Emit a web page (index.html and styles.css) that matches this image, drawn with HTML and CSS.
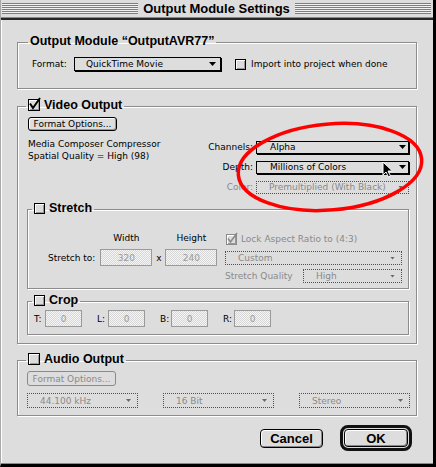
FILE: index.html
```html
<!DOCTYPE html>
<html lang="en">
<head>
<meta charset="utf-8">
<title>Output Module Settings</title>
<link rel="stylesheet" href="styles.css">
</head>
<body>
<div class="window">
  <div class="titlebar">
    <div class="stripes"></div>
    <div class="title">Output Module Settings</div>
    <div class="stripes"></div>
  </div>
  <div class="content">
    <fieldset class="group g-module">
      <legend class="legend">Output Module “OutputAVR77”</legend>
      <div class="format-row">
        <span class="format-lbl">Format:</span>
        <div class="popup pop-format"><span>QuickTime Movie</span><span class="tri"></span></div>
        <div class="check import"><span class="box"></span><span>Import into project when done</span></div>
      </div>
    </fieldset>

    <fieldset class="group g-video">
      <legend class="legend"><span class="lg"><span class="box big"><svg class="tick" width="10" height="10" viewBox="0 0 10 10"><path d="M1 3.5 L4 8 L11 -2" fill="none" stroke="#000" stroke-width="2"/></svg></span>Video Output</span></legend>
      <div class="btn-small">Format Options...</div>
      <div class="video-row">
        <div class="codec">Media Composer Compressor<br>Spatial Quality = High (98)</div>
        <div class="video-ctl">
          <div class="ctl-row"><span class="ctl-lbl">Channels:</span><div class="popup pop-video"><span>Alpha</span><span class="tri"></span></div></div>
          <div class="ctl-row"><span class="ctl-lbl">Depth:</span><div class="popup pop-video"><span>Millions of Colors</span><span class="tri"></span></div></div>
          <div class="ctl-row"><span class="ctl-lbl dis-text">Color:</span><div class="popup dis pop-video pop-color"><span>Premultiplied (With Black)</span><span class="tri small"></span></div></div>
        </div>
      </div>

      <fieldset class="group sub stretch">
        <legend class="legend"><span class="lg"><span class="box"></span>Stretch</span></legend>
        <div class="stretch-body">
          <div class="stretch-grid">
            <span></span><span class="colhead">Width</span><span></span><span class="colhead">Height</span>
            <span class="st-lbl">Stretch to:</span><span class="field">320</span><span class="times">x</span><span class="field">240</span>
          </div>
          <div class="stretch-right">
            <div class="check lock"><span class="box dis-box"><svg class="tick" width="9" height="9" viewBox="0 0 9 9"><path d="M1 3.5 L3.5 7 L10 -2" fill="none" stroke="#8a8a8a" stroke-width="1.6"/></svg></span><span>Lock Aspect Ratio to (4:3)</span></div>
            <div class="popup dis pop-custom"><span>Custom</span><span class="tri small"></span></div>
            <div class="quality-row"><span class="dis-text">Stretch Quality</span><div class="popup dis pop-quality"><span>High</span><span class="tri small"></span></div></div>
          </div>
        </div>
      </fieldset>

      <fieldset class="group sub crop">
        <legend class="legend"><span class="lg"><span class="box"></span>Crop</span></legend>
        <div class="crop-row">
          <span class="crop-lbl">T:</span><span class="field crop-field">0</span>
          <span class="crop-lbl">L:</span><span class="field crop-field">0</span>
          <span class="crop-lbl">B:</span><span class="field crop-field">0</span>
          <span class="crop-lbl">R:</span><span class="field crop-field">0</span>
        </div>
      </fieldset>
    </fieldset>

    <fieldset class="group audio">
      <legend class="legend"><span class="lg"><span class="box big"></span>Audio Output</span></legend>
      <div class="btn-small dis-btn">Format Options...</div>
      <div class="audio-pops">
        <div class="popup dis pop-audio"><span>44.100 kHz</span><span class="tri small"></span></div>
        <div class="popup dis pop-audio"><span>16 Bit</span><span class="tri small"></span></div>
        <div class="popup dis pop-audio"><span>Stereo</span><span class="tri small"></span></div>
      </div>
    </fieldset>

    <div class="actions">
      <div class="btn btn-cancel">Cancel</div>
      <div class="ok-ring"><div class="btn btn-ok">OK</div></div>
    </div>
  </div>
</div>

<svg class="annot" width="436" height="467" viewBox="0 0 436 467">
  <ellipse cx="330" cy="167" rx="92" ry="43" transform="rotate(-5 330 167)" fill="none" stroke="#ff0000" stroke-width="3.5"/>
  <path transform="translate(383 162)" d="M0 0 L0 13 L3 10 L5.5 15 L7.5 14 L5 9 L9.5 9 Z" fill="#000" stroke="#fff" stroke-width="1" stroke-linejoin="round"/>
</svg>
</body>
</html>
```

FILE: styles.css
```css
* { box-sizing: border-box; }
html, body { margin: 0; padding: 0; }
body {
  position: relative;
  width: 436px;
  height: 467px;
  background: #dddddd;
  font-family: "DejaVu Sans", Verdana, sans-serif;
  font-size: 9px;
  color: #000;
}
.window {
  width: 436px;
  height: 467px;
  background: #dddddd;
  border-left: 1px solid #a8a8a8;
  border-right: 3px solid #000;
  border-bottom: 3px solid #000;
  display: flex;
  flex-direction: column;
}
.titlebar {
  flex: none;
  height: 18px;
  display: flex;
  align-items: center;
  gap: 3px;
  padding: 0 2px 0 1px;
  border-bottom: 1px solid #8a8a8a;
}
.stripes {
  flex: 1;
  height: 11px;
  background: repeating-linear-gradient(to bottom, #7d7d7d 0 1px, #f2f2f2 1px 2px);
}
.title {
  font: bold 13px/14px "Liberation Sans", Arial, sans-serif;
  padding: 0 2px;
  white-space: nowrap;
}
.content {
  flex: 1;
  border-top: 2px solid #262626;
  border-bottom: 1px solid #8a8a8a;
  padding: 14px 16px 0 16px;
  box-shadow: inset 1px 0 0 #fff;
}

/* group boxes */
.group {
  margin: 0;
  padding: 0;
  min-width: 0;
  border: 1px solid #8c8c8c;
  box-shadow: 1px 1px 0 #fff, inset 1px 1px 0 #fff;
}
.legend {
  padding: 0 2px 3px;
  font: bold 12.5px/14px "Liberation Sans", Arial, sans-serif;
  white-space: nowrap;
}
.lg { display: inline-flex; align-items: center; gap: 4px; vertical-align: top; height: 14px; }

.box {
  flex: none;
  width: 11px;
  height: 11px;
  border: 1px solid #000;
  background: #dcdcdc;
  box-shadow: inset 1px 1px 0 #fff, inset -1px -1px 0 #999;
}
.box.big { width: 12px; height: 12px; }
.box.dis-box { border-color: #8a8a8a; }
.tick { display: block; overflow: visible; }

.check { display: flex; align-items: center; gap: 5px; white-space: nowrap; }

/* popups */
.popup {
  display: flex;
  align-items: center;
  justify-content: space-between;
  border: 1px solid #000;
  box-shadow: 1px 1px 0 #000;
  background: #dddddd;
  white-space: nowrap;
}
.popup.dis {
  border: 1px dotted #505050;
  box-shadow: none;
  color: #8a8a8a;
}
.tri {
  flex: none;
  width: 7px;
  height: 4px;
  background: #000;
  clip-path: polygon(0 0, 100% 0, 50% 100%);
}
.tri.small { width: 5px; height: 3px; background: #6a6a6a; }
.dis-text { color: #8a8a8a; }

/* output module group */
.g-module { padding: 5px 16px 16px 14px; }
.g-module > .legend { margin-left: -4px; }
.format-row { display: flex; align-items: center; height: 16px; }
.format-lbl { width: 42px; }
.pop-format { width: 147px; height: 14px; padding: 0 4px 0 11px; }
.import { margin-left: 14px; }

/* video group */
.g-video { margin-top: 9px; padding: 2px 6px 8px 10px; }
.g-video > .legend { margin-left: -2px; }
.btn-small {
  width: 89px;
  height: 14px;
  border: 1px solid #000;
  border-radius: 3px;
  background: #dddddd;
  box-shadow: inset 1px 1px 0 #fff, inset -1px -1px 0 #999;
  display: flex;
  align-items: center;
  justify-content: center;
  white-space: nowrap;
}
.btn-small.dis-btn { border-color: #8a8a8a; color: #8a8a8a; height: 15px; box-shadow: none; }
.video-row { display: flex; justify-content: space-between; margin-top: 9px; }
.codec { line-height: 12px; margin-top: -2px; white-space: nowrap; }
.video-ctl { display: flex; flex-direction: column; gap: 6px; padding-right: 1px; }
.ctl-row { display: flex; align-items: center; justify-content: flex-end; gap: 3px; height: 14px; }
.ctl-lbl { text-align: right; }
.pop-video { width: 153px; height: 13px; padding: 0 2px 0 13px; }
.pop-color { padding: 0 5px 0 12px; }

/* stretch */
.sub { margin-left: -1px; margin-right: 1px; }
.stretch { margin-top: 7px; padding: 15px 5px 5px 20px; }
.stretch > .legend { margin-left: -16px; }
.stretch-body { display: flex; justify-content: space-between; align-items: flex-start; }
.stretch-grid {
  display: grid;
  grid-template-columns: auto 52px 13px 52px;
  grid-template-rows: 11px 17px;
  row-gap: 5px;
  align-items: center;
}
.colhead { text-align: center; line-height: 11px; }
.st-lbl { padding-right: 5px; white-space: nowrap; }
.times { text-align: center; }
.field {
  display: flex;
  align-items: center;
  justify-content: center;
  height: 17px;
  border: 1px solid #9a9a9a;
  background: repeating-conic-gradient(#f6f6f6 0 25%, #d6d6d6 0 50%) 0 0 / 2px 2px;
  color: #9a9a9a;
}
.stretch-right { width: 178px; display: flex; flex-direction: column; }
.lock { height: 12px; gap: 4px; padding-left: 1px; color: #8a8a8a; }
.pop-custom { margin-top: 6px; width: 177px; height: 14px; padding: 0 6px 0 12px; }
.quality-row { margin-top: 4px; display: flex; justify-content: space-between; align-items: center; height: 14px; padding-right: 1px; }
.pop-quality { width: 99px; height: 14px; padding: 0 6px 0 12px; }

/* crop */
.crop { margin-top: 4px; padding: 0 5px 7px 6px; }
.crop > .legend { margin-left: -2px; }
.crop-row { display: flex; align-items: center; height: 17px; }
.crop-lbl { width: 11px; }
.crop-field { width: 37px; margin-right: 15px; }

/* audio */
.audio { margin-top: 8px; padding: 2px 6px 7px 9px; }
.audio > .legend { margin-left: -1px; }
.audio-pops { display: flex; justify-content: space-between; margin-top: 7px; }
.pop-audio { width: 111px; height: 15px; padding: 0 6px 0 12px; }

/* buttons */
.actions {
  display: flex;
  justify-content: flex-end;
  align-items: center;
  gap: 17px;
  margin-top: 9px;
  padding-right: 5px;
}
.btn {
  display: flex;
  align-items: center;
  justify-content: center;
  border: 1px solid #000;
  border-radius: 4px;
  background: #dddddd;
  box-shadow: inset 1px 1px 0 #fff, inset -1px -1px 0 #888;
  font: bold 13px/1 "Liberation Sans", Arial, sans-serif;
}
.btn-cancel { width: 63px; height: 19px; }
.ok-ring { border: 3px solid #111; border-radius: 8px; padding: 1px; }
.btn-ok { width: 64px; height: 18px; }

.annot { position: absolute; left: 0; top: 0; pointer-events: none; }
```
